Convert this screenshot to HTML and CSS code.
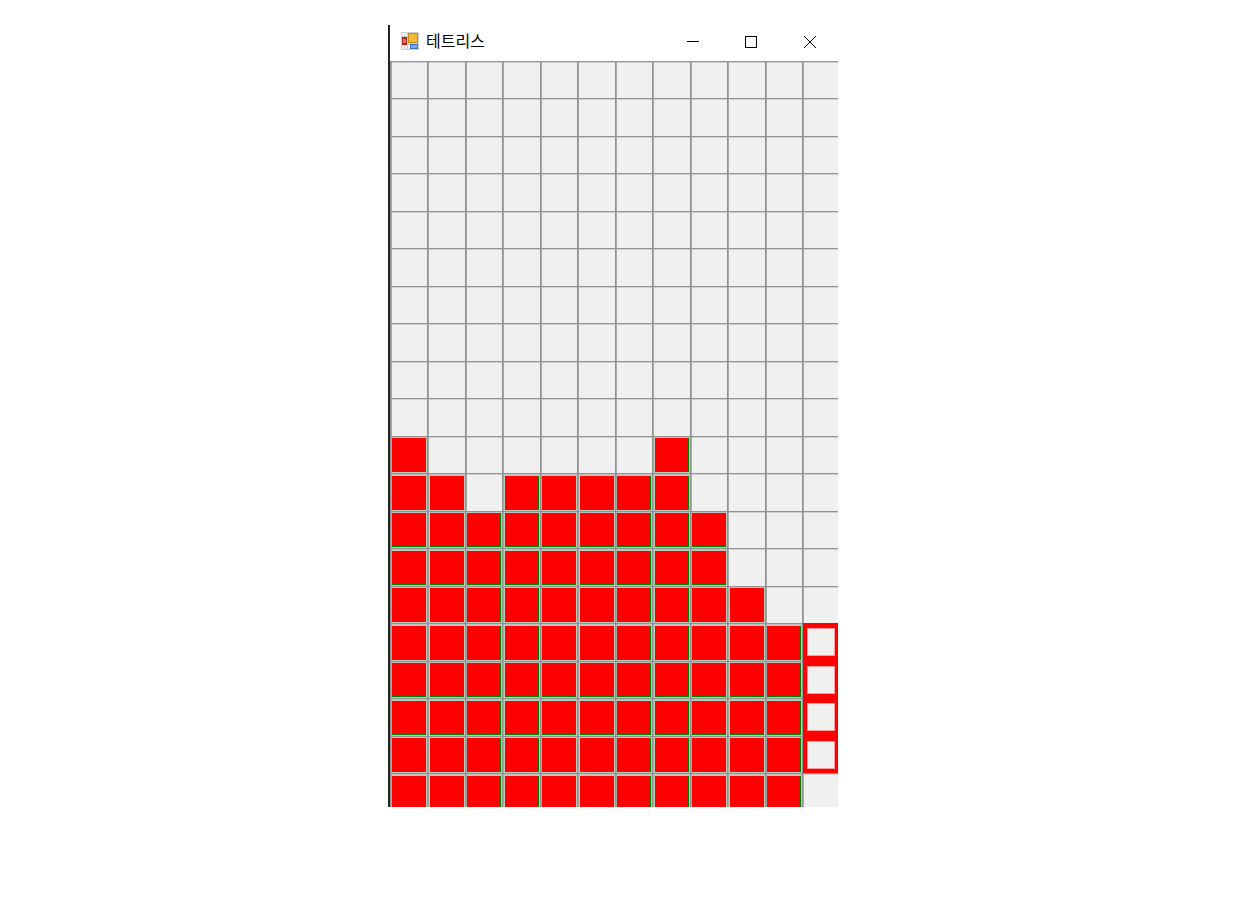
FILE: index.html
```html
<!DOCTYPE html>
<html lang="ko">
<head>
<meta charset="utf-8">
<title>테트리스</title>
<link rel="stylesheet" href="styles.css">
</head>
<body>
<main class="window">
  <span class="edge-glint"></span>
  <header class="titlebar">
    <svg class="app-icon" width="18" height="18" viewBox="0 0 18 18" aria-hidden="true">
      <rect x="0" y="0" width="18" height="18" fill="#d0d0d0"/>
      <rect x="1" y="1" width="2" height="3" fill="#f4f4f4"/>
      <rect x="4" y="1" width="2" height="3" fill="#f4f4f4"/>
      <rect x="1" y="14" width="2" height="3" fill="#f4f4f4"/>
      <rect x="4" y="14" width="2" height="3" fill="#f4f4f4"/>
      <rect x="7" y="13" width="2" height="4" fill="#f4f4f4"/>
      <rect x="1" y="5" width="5" height="8" fill="#a82c26"/>
      <rect x="2" y="7" width="3" height="4" fill="#e07468"/>
      <rect x="7" y="1" width="10" height="10" fill="#c98c18"/>
      <rect x="8" y="2" width="8" height="8" fill="#f2bc38"/>
      <rect x="9" y="12" width="8" height="5" fill="#3a70c4"/>
      <rect x="10" y="13" width="6" height="3" fill="#78a8e8"/>
    </svg>
    <h1 class="title">테트리스</h1>
    <div class="controls">
      <svg class="control" width="58" height="12" viewBox="0 0 58 12" aria-hidden="true"><path d="M22 5.5H34" fill="none" stroke="#000"/></svg>
      <svg class="control" width="58" height="12" viewBox="0 0 58 12" aria-hidden="true"><rect x="22.5" y="0.5" width="11" height="11" fill="none" stroke="#000"/></svg>
      <svg class="control" width="58" height="12" viewBox="0 0 58 12" aria-hidden="true"><path d="M23 0L35 12M35 0L23 12" fill="none" stroke="#000"/></svg>
    </div>
  </header>
  <section class="board">
    <div class="cell"></div><div class="cell"></div><div class="cell"></div><div class="cell"></div><div class="cell"></div><div class="cell"></div><div class="cell"></div><div class="cell"></div><div class="cell"></div><div class="cell"></div><div class="cell"></div><div class="cell"></div>
    <div class="cell"></div><div class="cell"></div><div class="cell"></div><div class="cell"></div><div class="cell"></div><div class="cell"></div><div class="cell"></div><div class="cell"></div><div class="cell"></div><div class="cell"></div><div class="cell"></div><div class="cell"></div>
    <div class="cell"></div><div class="cell"></div><div class="cell"></div><div class="cell"></div><div class="cell"></div><div class="cell"></div><div class="cell"></div><div class="cell"></div><div class="cell"></div><div class="cell"></div><div class="cell"></div><div class="cell"></div>
    <div class="cell"></div><div class="cell"></div><div class="cell"></div><div class="cell"></div><div class="cell"></div><div class="cell"></div><div class="cell"></div><div class="cell"></div><div class="cell"></div><div class="cell"></div><div class="cell"></div><div class="cell"></div>
    <div class="cell"></div><div class="cell"></div><div class="cell"></div><div class="cell"></div><div class="cell"></div><div class="cell"></div><div class="cell"></div><div class="cell"></div><div class="cell"></div><div class="cell"></div><div class="cell"></div><div class="cell"></div>
    <div class="cell"></div><div class="cell"></div><div class="cell"></div><div class="cell"></div><div class="cell"></div><div class="cell"></div><div class="cell"></div><div class="cell"></div><div class="cell"></div><div class="cell"></div><div class="cell"></div><div class="cell"></div>
    <div class="cell"></div><div class="cell"></div><div class="cell"></div><div class="cell"></div><div class="cell"></div><div class="cell"></div><div class="cell"></div><div class="cell"></div><div class="cell"></div><div class="cell"></div><div class="cell"></div><div class="cell"></div>
    <div class="cell"></div><div class="cell"></div><div class="cell"></div><div class="cell"></div><div class="cell"></div><div class="cell"></div><div class="cell"></div><div class="cell"></div><div class="cell"></div><div class="cell"></div><div class="cell"></div><div class="cell"></div>
    <div class="cell"></div><div class="cell"></div><div class="cell"></div><div class="cell"></div><div class="cell"></div><div class="cell"></div><div class="cell"></div><div class="cell"></div><div class="cell"></div><div class="cell"></div><div class="cell"></div><div class="cell"></div>
    <div class="cell"></div><div class="cell"></div><div class="cell"></div><div class="cell"></div><div class="cell"></div><div class="cell"></div><div class="cell"></div><div class="cell"></div><div class="cell"></div><div class="cell"></div><div class="cell"></div><div class="cell"></div>
    <div class="cell filled"></div><div class="cell"></div><div class="cell"></div><div class="cell"></div><div class="cell"></div><div class="cell"></div><div class="cell"></div><div class="cell filled"></div><div class="cell"></div><div class="cell"></div><div class="cell"></div><div class="cell"></div>
    <div class="cell filled"></div><div class="cell filled"></div><div class="cell"></div><div class="cell filled"></div><div class="cell filled"></div><div class="cell filled"></div><div class="cell filled"></div><div class="cell filled"></div><div class="cell"></div><div class="cell"></div><div class="cell"></div><div class="cell"></div>
    <div class="cell filled"></div><div class="cell filled"></div><div class="cell filled"></div><div class="cell filled"></div><div class="cell filled"></div><div class="cell filled"></div><div class="cell filled"></div><div class="cell filled"></div><div class="cell filled"></div><div class="cell"></div><div class="cell"></div><div class="cell"></div>
    <div class="cell filled"></div><div class="cell filled"></div><div class="cell filled"></div><div class="cell filled"></div><div class="cell filled"></div><div class="cell filled"></div><div class="cell filled"></div><div class="cell filled"></div><div class="cell filled"></div><div class="cell"></div><div class="cell"></div><div class="cell"></div>
    <div class="cell filled"></div><div class="cell filled"></div><div class="cell filled"></div><div class="cell filled"></div><div class="cell filled"></div><div class="cell filled"></div><div class="cell filled"></div><div class="cell filled"></div><div class="cell filled"></div><div class="cell filled"></div><div class="cell"></div><div class="cell"></div>
    <div class="cell filled"></div><div class="cell filled"></div><div class="cell filled"></div><div class="cell filled"></div><div class="cell filled"></div><div class="cell filled"></div><div class="cell filled"></div><div class="cell filled"></div><div class="cell filled"></div><div class="cell filled"></div><div class="cell filled"></div><div class="cell active"></div>
    <div class="cell filled"></div><div class="cell filled"></div><div class="cell filled"></div><div class="cell filled"></div><div class="cell filled"></div><div class="cell filled"></div><div class="cell filled"></div><div class="cell filled"></div><div class="cell filled"></div><div class="cell filled"></div><div class="cell filled"></div><div class="cell active"></div>
    <div class="cell filled"></div><div class="cell filled"></div><div class="cell filled"></div><div class="cell filled"></div><div class="cell filled"></div><div class="cell filled"></div><div class="cell filled"></div><div class="cell filled"></div><div class="cell filled"></div><div class="cell filled"></div><div class="cell filled"></div><div class="cell active"></div>
    <div class="cell filled"></div><div class="cell filled"></div><div class="cell filled"></div><div class="cell filled"></div><div class="cell filled"></div><div class="cell filled"></div><div class="cell filled"></div><div class="cell filled"></div><div class="cell filled"></div><div class="cell filled"></div><div class="cell filled"></div><div class="cell active"></div>
    <div class="cell filled"></div><div class="cell filled"></div><div class="cell filled"></div><div class="cell filled"></div><div class="cell filled"></div><div class="cell filled"></div><div class="cell filled"></div><div class="cell filled"></div><div class="cell filled"></div><div class="cell filled"></div><div class="cell filled"></div><div class="cell"></div>
  </section>
</main>
</body>
</html>
```
FILE: styles.css
```css
html, body {
  margin: 0;
  padding: 0;
  background: #fff;
}
body {
  padding: 25px 0 0 388px;
  height: 904px;
  box-sizing: border-box;
  overflow: hidden;
  font-family: "Noto Sans CJK KR", "Noto Sans", sans-serif;
}
.window {
  position: relative;
  width: 450px;
  height: 782px;
  box-sizing: border-box;
  border-left: 2px solid #222;
  display: flex;
  flex-direction: column;
  overflow: hidden;
  background: #fff;
}
.edge-glint {
  position: absolute;
  left: -2px;
  top: 12px;
  width: 1px;
  height: 2px;
  background: #2a6fc0;
  box-shadow: 0 6px 0 #2a6fc0, 0 12px 0 #2a6fc0;
}
.titlebar {
  flex: 0 0 36px;
  display: flex;
  align-items: center;
  padding-left: 11px;
}
.app-icon {
  margin-right: 7px;
  margin-top: -4px;
}
.title {
  margin: -6px 0 0;
  font-size: 16px;
  font-weight: 400;
  line-height: 20px;
  color: #000;
}
.controls {
  margin-left: auto;
  display: flex;
  margin-right: -1px;
  margin-top: -2px;
}
.control {
  display: block;
}
.board {
  flex: 0 0 750px;
  width: 450px;
  margin: -0.5px 0 0 -0.5px;
  display: grid;
  grid-template-columns: repeat(12, 37.5px);
  grid-auto-rows: 37.5px;
  background: #f0f0f0;
  overflow: hidden;
}
.cell {
  box-sizing: border-box;
  background: #f0f0f0;
  border-top: 1px solid #929292;
  border-left: 1px solid #929292;
  box-shadow: inset 1px 0 0 #a8a8a8, inset 0 1px 0 #d0d0d0;
}
.filled {
  position: relative;
  background: #b8ccb8;
  box-shadow: inset 1px 0 0 #a8a8a8, inset 0 1px 0 #c0c0c0;
}
.filled::after {
  content: "";
  position: absolute;
  inset: 1.5px 1px 1px 1.5px;
  background: #ff0000;
  border-right: 1px solid #008000;
  border-bottom: 1px solid #008000;
}
.active {
  position: relative;
  background: #ff0000;
  border-top: 0;
  box-shadow: none;
}
.active::after {
  content: "";
  position: absolute;
  inset: 5px 4.5px 4.5px 4px;
  background: #f0f0f0;
  border: 1px solid #ff9c9c;
  box-sizing: border-box;
}
```
